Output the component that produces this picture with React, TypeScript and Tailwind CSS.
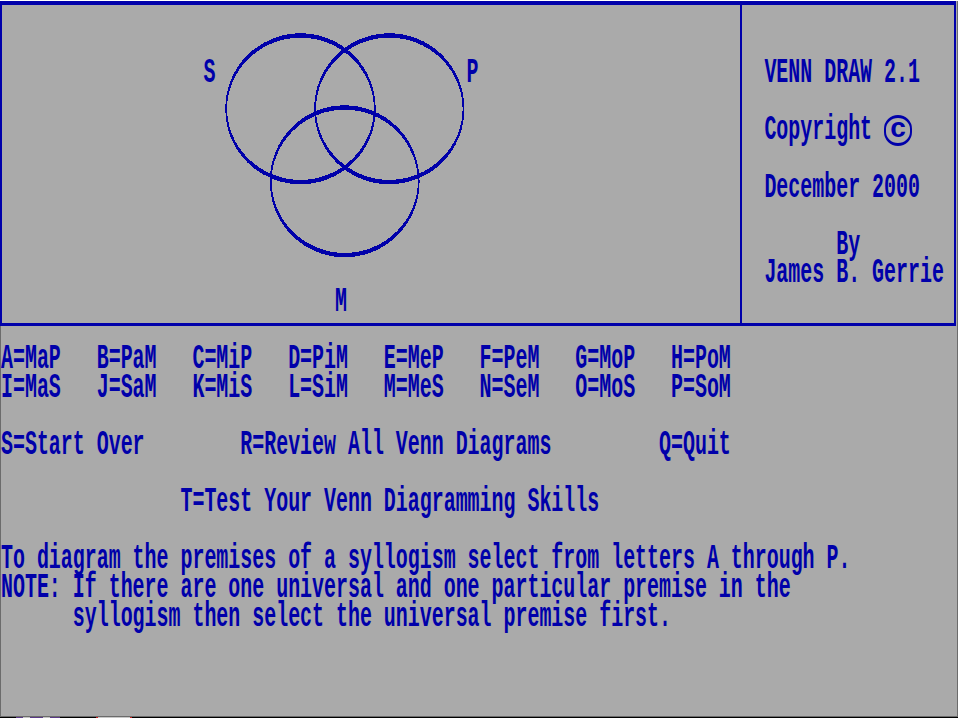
import React from "react";

const BLUE = "#0000aa";

function Line({ text = "", children }: { text?: string; children?: React.ReactNode }) {
  return (
    <div className="h-[28.6px] flex items-start whitespace-pre">
      <span className="block origin-top scale-y-[1.8] translate-y-[1.5px] leading-[15px]">{text}</span>
      {children}
    </div>
  );
}

function Venn() {
  const sx = 1.6;
  const sy = 4;
  const circles = [
    { cx: 298.5, cy: 103.75, rx: 74.3, ry: 73.3 },
    { cx: 387.3, cy: 103.75, rx: 74.2, ry: 73.3 },
    { cx: 342.7, cy: 176.3, rx: 74, ry: 73.8 },
  ];
  return (
    <svg className="absolute left-0 top-0" width="738" height="318" shapeRendering="crispEdges">
      <g transform={`scale(${sx} ${sy})`} fill="none" stroke={BLUE} strokeWidth="1.1">
        {circles.map((c, i) => (
          <ellipse key={i} cx={c.cx / sx} cy={c.cy / sy} rx={c.rx / sx} ry={c.ry / sy} />
        ))}
      </g>
    </svg>
  );
}

export default function App() {
  return (
    <div className="w-[958px] h-[718px] bg-black font-['Liberation_Mono',monospace] font-bold text-[19.96px] text-[#0000aa]">
      <div className="h-[716px] bg-[#aaaaaa] border-l border-r border-b border-[#6b6b6b]">
        {/* diagram box */}
        <div className="-ml-px mt-px w-[956px] h-[325px] flex border-t-4 border-b-[3px] border-x-2 border-[#0000aa]">
          <div className="relative w-[740px] border-r-2 border-[#0000aa]">
            <Venn />
            <div className="relative -ml-[2px] pt-[52.2px]">
              <Line text={"                 S                     P"} />
              <Line />
              <Line />
              <Line />
              <Line />
              <Line />
              <Line />
              <Line />
              <Line text={"                            M"} />
            </div>
          </div>
          <div className="flex-1 pl-[22.4px] pt-[52.2px]">
            <Line text="VENN DRAW 2.1" />
            <Line />
            <Line text="Copyright ">
              <span className="mt-[0.6px] w-[28px] h-[31px] rounded-full border-x-2 border-y-[3px] border-[#0000aa] flex items-center justify-center">
                <span className="text-[28px] leading-none -mt-[4px] font-['Liberation_Sans',sans-serif]">c</span>
              </span>
            </Line>
            <Line />
            <Line text="December 2000" />
            <Line />
            <Line text="      By" />
            <Line text="James B. Gerrie" />
          </div>
        </div>

        {/* menu */}
        <div className="pt-[17.2px]">
          <Line text="A=MaP   B=PaM   C=MiP   D=PiM   E=MeP   F=PeM   G=MoP   H=PoM" />
          <Line text="I=MaS   J=SaM   K=MiS   L=SiM   M=MeS   N=SeM   O=MoS   P=SoM" />
          <Line />
          <Line text="S=Start Over        R=Review All Venn Diagrams         Q=Quit" />
          <Line />
          <Line text="               T=Test Your Venn Diagramming Skills" />
          <Line />
          <Line text="To diagram the premises of a syllogism select from letters A through P." />
          <Line text="NOTE: If there are one universal and one particular premise in the" />
          <Line text="      syllogism then select the universal premise first." />
        </div>
      </div>

      {/* strip of the desktop under the screen */}
      <div className="h-[2px] flex">
        <div className="w-[16px] bg-black" />
        <div className="w-[7px] bg-[#5a3a86]" />
        <div className="w-[7px] bg-[#c4c4c4]" />
        <div className="w-[13px] bg-[#5a3a86]" />
        <div className="w-[7px] bg-[#c4c4c4]" />
        <div className="w-[10px] bg-[#5a3a86]" />
        <div className="w-[36px] bg-black" />
        <div className="w-[2px] bg-[#c02020]" />
        <div className="w-[32px] bg-[#c8c8c8]" />
        <div className="w-[2px] bg-[#c02020]" />
      </div>
    </div>
  );
}
